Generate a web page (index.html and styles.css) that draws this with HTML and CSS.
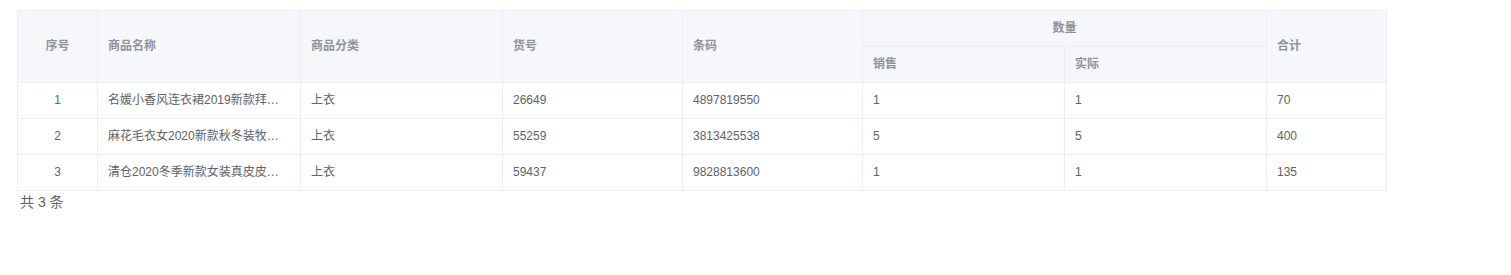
FILE: index.html
```html
<!DOCTYPE html>
<html lang="zh">
<head>
<meta charset="utf-8">
<link rel="stylesheet" href="styles.css">
</head>
<body>
<div class="page">
  <table class="grid">
    <colgroup>
      <col class="c-idx"><col class="c-name"><col class="c-cat"><col class="c-sku"><col class="c-code"><col class="c-q"><col class="c-q"><col class="c-sum">
    </colgroup>
    <thead>
      <tr>
        <th rowspan="2" class="center">序号</th>
        <th rowspan="2">商品名称</th>
        <th rowspan="2">商品分类</th>
        <th rowspan="2">货号</th>
        <th rowspan="2">条码</th>
        <th colspan="2" class="center">数量</th>
        <th rowspan="2">合计</th>
      </tr>
      <tr>
        <th>销售</th>
        <th>实际</th>
      </tr>
    </thead>
    <tbody>
      <tr>
        <td class="center">1</td>
        <td><div class="ellipsis">名媛小香风连衣裙2019新款拜…</div></td>
        <td>上衣</td>
        <td>26649</td>
        <td>4897819550</td>
        <td>1</td>
        <td>1</td>
        <td>70</td>
      </tr>
      <tr>
        <td class="center">2</td>
        <td><div class="ellipsis">麻花毛衣女2020新款秋冬装牧…</div></td>
        <td>上衣</td>
        <td>55259</td>
        <td>3813425538</td>
        <td>5</td>
        <td>5</td>
        <td>400</td>
      </tr>
      <tr>
        <td class="center">3</td>
        <td><div class="ellipsis">清仓2020冬季新款女装真皮皮…</div></td>
        <td>上衣</td>
        <td>59437</td>
        <td>9828813600</td>
        <td>1</td>
        <td>1</td>
        <td>135</td>
      </tr>
    </tbody>
  </table>
  <div class="total">共 3 条</div>
</div>
</body>
</html>
```
FILE: styles.css
```css
html, body {
  margin: 0;
  padding: 0;
  background: #ffffff;
  font-family: "Liberation Sans", "Noto Sans CJK SC", sans-serif;
}

.page {
  padding: 10px 0 0 17px;
}

.grid {
  border-collapse: collapse;
  table-layout: fixed;
  width: 1370px;
  font-size: 12px;
  color: #606266;
}

.c-idx { width: 80px; }
.c-name { width: 203px; }
.c-cat { width: 202px; }
.c-sku { width: 180px; }
.c-code { width: 180px; }
.c-q { width: 202px; }
.c-sum { width: 120px; }

.grid th,
.grid td {
  border: 1px solid #ebeef5;
  padding: 0 10px;
  height: 36px;
  text-align: left;
  vertical-align: middle;
  line-height: 23px;
  box-sizing: border-box;
}

.grid th {
  background: #f5f7fa;
  color: #909399;
  font-weight: bold;
}

.grid .center {
  text-align: center;
}

.ellipsis {
  white-space: nowrap;
  overflow: hidden;
}

.total {
  font-size: 14px;
  color: #606266;
  line-height: 22px;
  padding: 0 0 0 3px;
}
```
